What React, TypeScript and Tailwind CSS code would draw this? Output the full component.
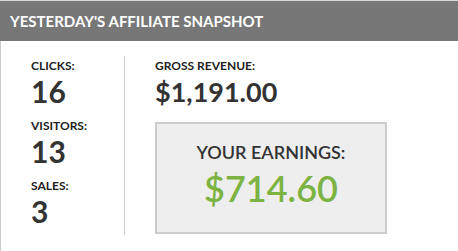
import React from "react";

const font = { fontFamily: "Lato, 'Open Sans', sans-serif" };

function Stat({ label, value }: { label: string; value: string }) {
  return (
    <div className="flex flex-col">
      <div className="text-[12px] leading-[14px] font-bold text-[#222]">{label}</div>
      <div className="mt-[3px] text-[30px] leading-[30px] font-bold text-[#333]">{value}</div>
    </div>
  );
}

export default function App() {
  return (
    <div className="w-[458px] h-[251px] bg-white overflow-hidden" style={font}>
      <div className="h-[1px] bg-[#d8d8d8]" />
      <div className="h-[40px] bg-[#777777] pl-[10px] pt-[12px]">
        <div className="text-[15px] leading-[17px] font-bold text-white">YESTERDAY'S AFFILIATE SNAPSHOT</div>
      </div>
      <div className="h-[210px] border-l border-[#cccccc] pt-[15px] flex">
        <div className="w-[124px] h-[179px] pl-[30px] pt-[3px] border-r border-[#cccccc] flex flex-col gap-[13px]">
          <Stat label="CLICKS:" value="16" />
          <Stat label="VISITORS:" value="13" />
          <Stat label="SALES:" value="3" />
        </div>
        <div className="pl-[30px] pt-[3px] flex flex-col">
          <div className="text-[12px] leading-[14px] font-bold text-[#222]">GROSS REVENUE:</div>
          <div className="mt-[5px] text-[27px] leading-[27px] font-bold text-[#333]">$1,191.00</div>
          <div className="mt-[17px] w-[232px] h-[112px] bg-[#eeeeee] border-2 border-[#cccccc] flex flex-col items-center pt-[17px]">
            <div className="text-[18px] leading-[22px] font-semibold text-[#333]">YOUR EARNINGS:</div>
            <div className="mt-[7px] text-[36px] leading-[36px] font-semibold text-[#7cb342]">$714.60</div>
          </div>
        </div>
      </div>
    </div>
  );
}
